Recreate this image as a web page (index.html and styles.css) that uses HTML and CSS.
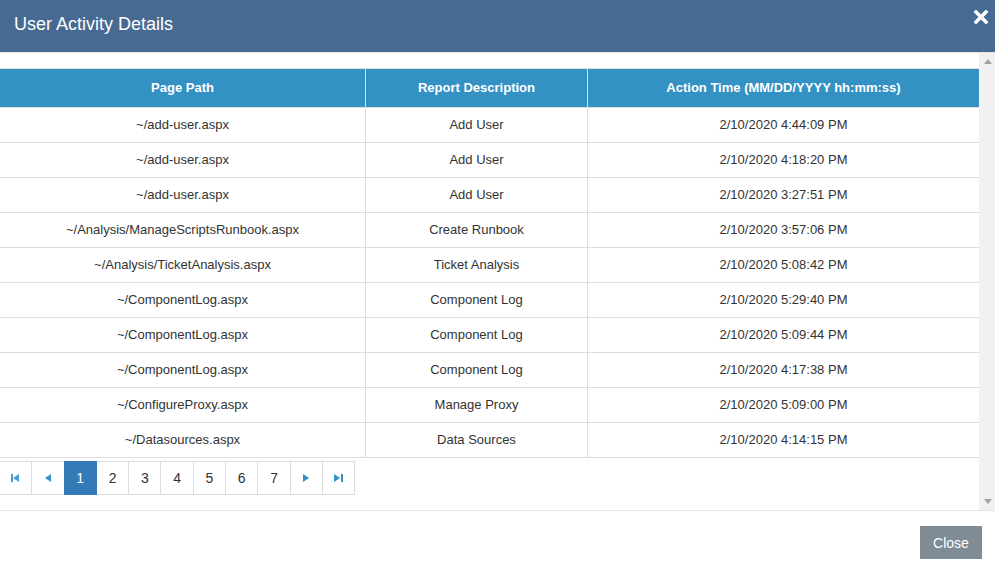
FILE: index.html
```html
<!DOCTYPE html>
<html>
<head>
<meta charset="utf-8">
<link rel="stylesheet" href="styles.css">
</head>
<body>
<div class="modal">
  <div class="modal-header">
    <h4 class="modal-title">User Activity Details</h4>
    <button class="x-btn" aria-label="close">
      <svg width="14" height="14" viewBox="0 0 14 14"><path d="M2 2 L12 12 M12 2 L2 12" stroke="#fff" stroke-width="3.6" stroke-linecap="square"/></svg>
    </button>
  </div>
  <div class="modal-body">
    <div class="scroll-content">
      <table class="grid">
        <colgroup><col class="c1"><col class="c2"><col class="c3"></colgroup>
        <thead>
          <tr><th>Page Path</th><th>Report Description</th><th>Action Time (MM/DD/YYYY hh:mm:ss)</th></tr>
        </thead>
        <tbody>
          <tr><td>~/add-user.aspx</td><td>Add User</td><td>2/10/2020 4:44:09 PM</td></tr>
          <tr><td>~/add-user.aspx</td><td>Add User</td><td>2/10/2020 4:18:20 PM</td></tr>
          <tr><td>~/add-user.aspx</td><td>Add User</td><td>2/10/2020 3:27:51 PM</td></tr>
          <tr><td>~/Analysis/ManageScriptsRunbook.aspx</td><td>Create Runbook</td><td>2/10/2020 3:57:06 PM</td></tr>
          <tr><td>~/Analysis/TicketAnalysis.aspx</td><td>Ticket Analysis</td><td>2/10/2020 5:08:42 PM</td></tr>
          <tr><td>~/ComponentLog.aspx</td><td>Component Log</td><td>2/10/2020 5:29:40 PM</td></tr>
          <tr><td>~/ComponentLog.aspx</td><td>Component Log</td><td>2/10/2020 5:09:44 PM</td></tr>
          <tr><td>~/ComponentLog.aspx</td><td>Component Log</td><td>2/10/2020 4:17:38 PM</td></tr>
          <tr><td>~/ConfigureProxy.aspx</td><td>Manage Proxy</td><td>2/10/2020 5:09:00 PM</td></tr>
          <tr><td>~/Datasources.aspx</td><td>Data Sources</td><td>2/10/2020 4:14:15 PM</td></tr>
        </tbody>
      </table>
      <div class="pager">
        <span class="pg arrow"><svg width="9" height="8" viewBox="0 0 9 8"><rect x="0" y="0" width="2" height="8" fill="#4a9fd0"/><path d="M8 0 L2 4 L8 8 Z" fill="#4a9fd0"/></svg></span>
        <span class="pg arrow"><svg width="6" height="8" viewBox="0 0 6 8"><path d="M6 0 L0 4 L6 8 Z" fill="#3391c4"/></svg></span>
        <span class="pg active">1</span>
        <span class="pg">2</span>
        <span class="pg">3</span>
        <span class="pg">4</span>
        <span class="pg">5</span>
        <span class="pg">6</span>
        <span class="pg">7</span>
        <span class="pg arrow"><svg width="6" height="8" viewBox="0 0 6 8"><path d="M0 0 L6 4 L0 8 Z" fill="#3391c4"/></svg></span>
        <span class="pg arrow"><svg width="9" height="8" viewBox="0 0 9 8"><path d="M0 0 L6 4 L0 8 Z" fill="#3391c4"/><rect x="7" y="0" width="2" height="8" fill="#3391c4"/></svg></span>
      </div>
    </div>
    <div class="vscroll">
      <svg width="8" height="5" viewBox="0 0 8 5"><path d="M0 5 L4 0 L8 5 Z" fill="#a3a3a3"/></svg>
      <svg width="8" height="5" viewBox="0 0 8 5"><path d="M0 0 L4 5 L8 0 Z" fill="#a3a3a3"/></svg>
    </div>
  </div>
  <div class="modal-footer">
    <button class="close-btn">Close</button>
  </div>
</div>
</body>
</html>
```
FILE: styles.css
```css
html, body {
  margin: 0;
  padding: 0;
  background: #fff;
  font-family: "Liberation Sans", Arial, sans-serif;
  color: #333;
}
.modal {
  width: 995px;
  height: 572px;
  display: flex;
  flex-direction: column;
  overflow: hidden;
}
.modal-header {
  height: 52px;
  flex: none;
  background: #466a91;
  border-bottom: 1px solid #e5e5e5;
  display: flex;
  align-items: flex-start;
  justify-content: space-between;
}
.modal-title {
  margin: 0;
  padding: 13px 0 0 14px;
  font-size: 18px;
  font-weight: normal;
  color: #fff;
  line-height: 22px;
}
.x-btn {
  background: none;
  border: 0;
  padding: 0;
  margin: 10px 7px 0 0;
  width: 14px;
  height: 14px;
  display: flex;
}
.modal-body {
  height: 457px;
  flex: none;
  display: flex;
  border-bottom: 1px solid #e5e5e5;
}
.scroll-content {
  flex: 1;
  overflow: hidden;
  padding-top: 15px;
}
.vscroll {
  width: 16px;
  background: #f1f1f1;
  display: flex;
  flex-direction: column;
  justify-content: space-between;
  align-items: center;
  padding: 6px 0 6px 1px;
  box-sizing: border-box;
}
.grid {
  border-collapse: collapse;
  width: 980px;
  margin-left: -1px;
  table-layout: fixed;
  font-size: 13px;
}
.c1 { width: 366px; }
.c2 { width: 222px; }
.c3 { width: 392px; }
.grid th {
  background: #3391c4;
  color: #fff;
  font-weight: bold;
  height: 36px;
  padding: 0 0 2px;
  border: 1px solid #ddd;
  text-align: center;
}
.grid td {
  height: 32px;
  padding: 0 0 2px;
  border: 1px solid #ddd;
  text-align: center;
  color: #333;
}
.pager {
  display: flex;
  margin-top: 3px;
  margin-left: -1px;
}
.pg {
  width: 31.3px;
  height: 32px;
  border: 1px solid #ddd;
  margin-right: -1px;
  display: flex;
  align-items: center;
  justify-content: center;
  font-size: 14px;
  color: #333;
  background: #fff;
  position: relative;
}
.pg.active {
  background: #337ab7;
  border-color: #337ab7;
  color: #fff;
  z-index: 1;
}
.modal-footer {
  flex: 1;
  display: flex;
  justify-content: flex-end;
  align-items: flex-start;
  padding: 15px 13px 0 0;
}
.close-btn {
  width: 62px;
  height: 33px;
  background: #7f8c95;
  color: #fff;
  border: 0;
  font-family: "Liberation Sans", Arial, sans-serif;
  font-size: 14px;
  padding: 0;
}
```
